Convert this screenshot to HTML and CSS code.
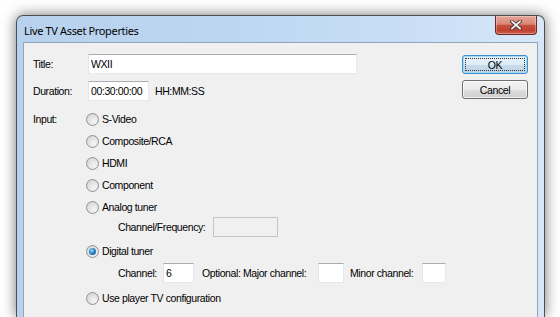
FILE: index.html
```html
<!DOCTYPE html>
<html lang="en">
<head>
  <meta charset="UTF-8">
  <meta name="viewport" content="width=device-width, initial-scale=1.0">
  <title>Live TV Asset Properties</title>
  <link rel="stylesheet" href="styles.css">
</head>
<body>
  <div class="window">
    <div class="titlebar">
      <span class="caption">Live TV Asset Properties</span>
      <button class="close" type="button" aria-label="Close">
        <svg width="12" height="10" viewBox="0 0 12 10">
          <path d="M2 1.5 L10 8.5 M10 1.5 L2 8.5" stroke="#4a3030" stroke-width="3.6" stroke-linecap="square"/>
          <path d="M2 1.5 L10 8.5 M10 1.5 L2 8.5" stroke="#f4f4f4" stroke-width="1.8" stroke-linecap="square"/>
        </svg>
      </button>
    </div>

    <div class="client">
      <div class="form">
        <div class="row">
          <span class="label">Title:</span>
          <input class="text title-box" type="text" value="WXII">
        </div>
        <div class="row">
          <span class="label">Duration:</span>
          <input class="text duration-box" type="text" value="00:30:00:00">
          <span class="hint">HH:MM:SS</span>
        </div>

        <div class="inputs">
          <span class="label input-label">Input:</span>
          <div class="choices">
            <div class="choice"><span class="radio"></span>S-Video</div>
            <div class="choice"><span class="radio"></span>Composite/RCA</div>
            <div class="choice"><span class="radio"></span>HDMI</div>
            <div class="choice"><span class="radio"></span>Component</div>
            <div class="choice"><span class="radio"></span>Analog tuner</div>
            <div class="sub sub-analog">
              <span class="sub-label freq-label">Channel/Frequency:</span>
              <input class="text disabled freq-box" type="text" disabled>
            </div>
            <div class="choice digital"><span class="radio checked"></span>Digital tuner</div>
            <div class="sub sub-digital">
              <span class="sub-label channel-label">Channel:</span>
              <input class="text channel-box" type="text" value="6">
              <span class="sub-label major-label">Optional: Major channel:</span>
              <input class="text major-box" type="text">
              <span class="sub-label minor-label">Minor channel:</span>
              <input class="text minor-box" type="text">
            </div>
            <div class="choice player"><span class="radio"></span>Use player TV configuration</div>
          </div>
        </div>
      </div>

      <div class="buttons">
        <button class="btn default" type="button"><span class="focus">OK</span></button>
        <button class="btn" type="button">Cancel</button>
      </div>
    </div>
  </div>
</body>
</html>
```

FILE: styles.css
```css
/* Page */
html, body {
  height: 100%;
}

body {
  margin: 0;
  background: #fff;
  overflow: hidden;
  font-family: "Liberation Sans", Arial, sans-serif;
  font-size: 10.5px;
  letter-spacing: -0.4px;
  color: #000;
}

/* Window frame (runs past the bottom of the view) */
.window {
  width: 529px;
  height: 302px;
  margin: 15px 0 0 16px;
  padding: 0 6px;
  box-sizing: border-box;
  border: 1px solid #4a4f55;
  border-bottom: none;
  border-radius: 7px 7px 0 0;
  background: linear-gradient(to right, #b8d2ee 0%, #bcd6f2 40%, #c9def5 75%, #d7e7f8 100%);
  box-shadow: 0 0 14px rgba(0, 0, 0, 0.55);
  display: flex;
  flex-direction: column;
}

.titlebar {
  height: 26px;
  display: flex;
  align-items: flex-start;
  justify-content: space-between;
}

.caption {
  font-family: "Noto Sans", "Open Sans", sans-serif;
  font-size: 11px;
  letter-spacing: -0.35px;
  margin: 7px 0 0 1px;
  color: #000;
}

.close {
  width: 42px;
  height: 19px;
  margin-right: 1px;
  padding: 0;
  border: 1px solid #6b2a22;
  border-top: none;
  border-radius: 0 0 4px 4px;
  background: linear-gradient(to bottom, #e6a597 0%, #d98878 45%, #c5503e 52%, #c04030 80%, #d0604a 100%);
  box-shadow: inset 0 0 0 1px rgba(255, 255, 255, 0.3);
  display: flex;
  align-items: center;
  justify-content: center;
}

/* Client area */
.client {
  flex: 1;
  background: #f0f0f0;
  border: 1px solid #8ea6c0;
  border-bottom: none;
  padding: 11px 9px 0 9px;
  display: flex;
}

.form {
  flex: 1;
}

.row {
  height: 20px;
  display: flex;
  align-items: center;
  margin-bottom: 7px;
}

.label {
  width: 55px;
  flex-shrink: 0;
}

.text {
  height: 20px;
  box-sizing: border-box;
  padding: 0 2px;
  margin: 0;
  border: 1px solid;
  border-color: #abadb3 #e3e9ef #e3e9ef #e2e3ea;
  background: #fff;
  font-family: "Liberation Sans", Arial, sans-serif;
  font-size: 10.5px;
  letter-spacing: -0.4px;
  color: #000;
  outline: none;
}

.title-box {
  width: 269px;
}

.duration-box {
  width: 61px;
}

.hint {
  margin-left: 6px;
}

/* Input choices */
.inputs {
  display: flex;
  margin-top: 4px;
}

.input-label {
  height: 22px;
  line-height: 22px;
}

.choices {
  margin-left: -2px;
}

.choice {
  height: 22px;
  display: flex;
  align-items: center;
}

.radio {
  width: 13px;
  height: 13px;
  box-sizing: border-box;
  border-radius: 50%;
  border: 1px solid #929292;
  background: radial-gradient(circle at 65% 70%, #f6f6f6 0%, #e4e4e4 45%, #cfcfcf 100%);
  margin-right: 3px;
  position: relative;
}

.radio.checked::after {
  content: "";
  position: absolute;
  left: 2px;
  top: 2px;
  width: 7px;
  height: 7px;
  border-radius: 50%;
  background: radial-gradient(circle at 40% 35%, #9edcfb 0%, #2a86c8 45%, #0c4d86 100%);
}

.sub {
  height: 20px;
  display: flex;
  align-items: center;
  padding-left: 32px;
}

.sub-analog {
  margin-top: -1px;
}

.digital {
  margin-top: 3px;
}

.sub-digital {
  margin-top: 1px;
}

.player {
  margin-top: 4px;
}

.sub-label {
  flex-shrink: 0;
}

.freq-label {
  width: 95px;
}

.freq-box {
  width: 65px;
  height: 20px;
  background: #f0f0f0;
  border-color: #c5c5c5;
}

.channel-label {
  width: 45px;
}

.channel-box {
  width: 31px;
}

.major-label {
  width: 116px;
  margin-left: 8px;
}

.major-box {
  width: 26px;
}

.minor-label {
  width: 72px;
  margin-left: 6px;
}

.minor-box {
  width: 24px;
}

/* Buttons */
.buttons {
  display: flex;
  flex-direction: column;
  gap: 6px;
  margin-top: 1px;
}

.btn {
  width: 66px;
  height: 19px;
  padding: 0;
  border: 1px solid #707070;
  border-radius: 3px;
  background: linear-gradient(to bottom, #f2f2f2 0%, #ebebeb 50%, #dddddd 51%, #cfcfcf 100%);
  box-shadow: inset 0 0 0 1px rgba(255, 255, 255, 0.7);
  font-family: "Liberation Sans", Arial, sans-serif;
  font-size: 10.5px;
  letter-spacing: -0.4px;
  color: #000;
}

.btn.default {
  border-color: #3c8fd0;
  background: linear-gradient(to bottom, #eaf4fb 0%, #dcebf6 50%, #c9dcec 51%, #bdd3e6 100%);
  box-shadow: inset 0 0 0 1px #a6dcf8;
  padding: 2px;
}

.focus {
  display: flex;
  align-items: center;
  justify-content: center;
  height: 100%;
  box-sizing: border-box;
  border: 1px dotted #333;
}
```
